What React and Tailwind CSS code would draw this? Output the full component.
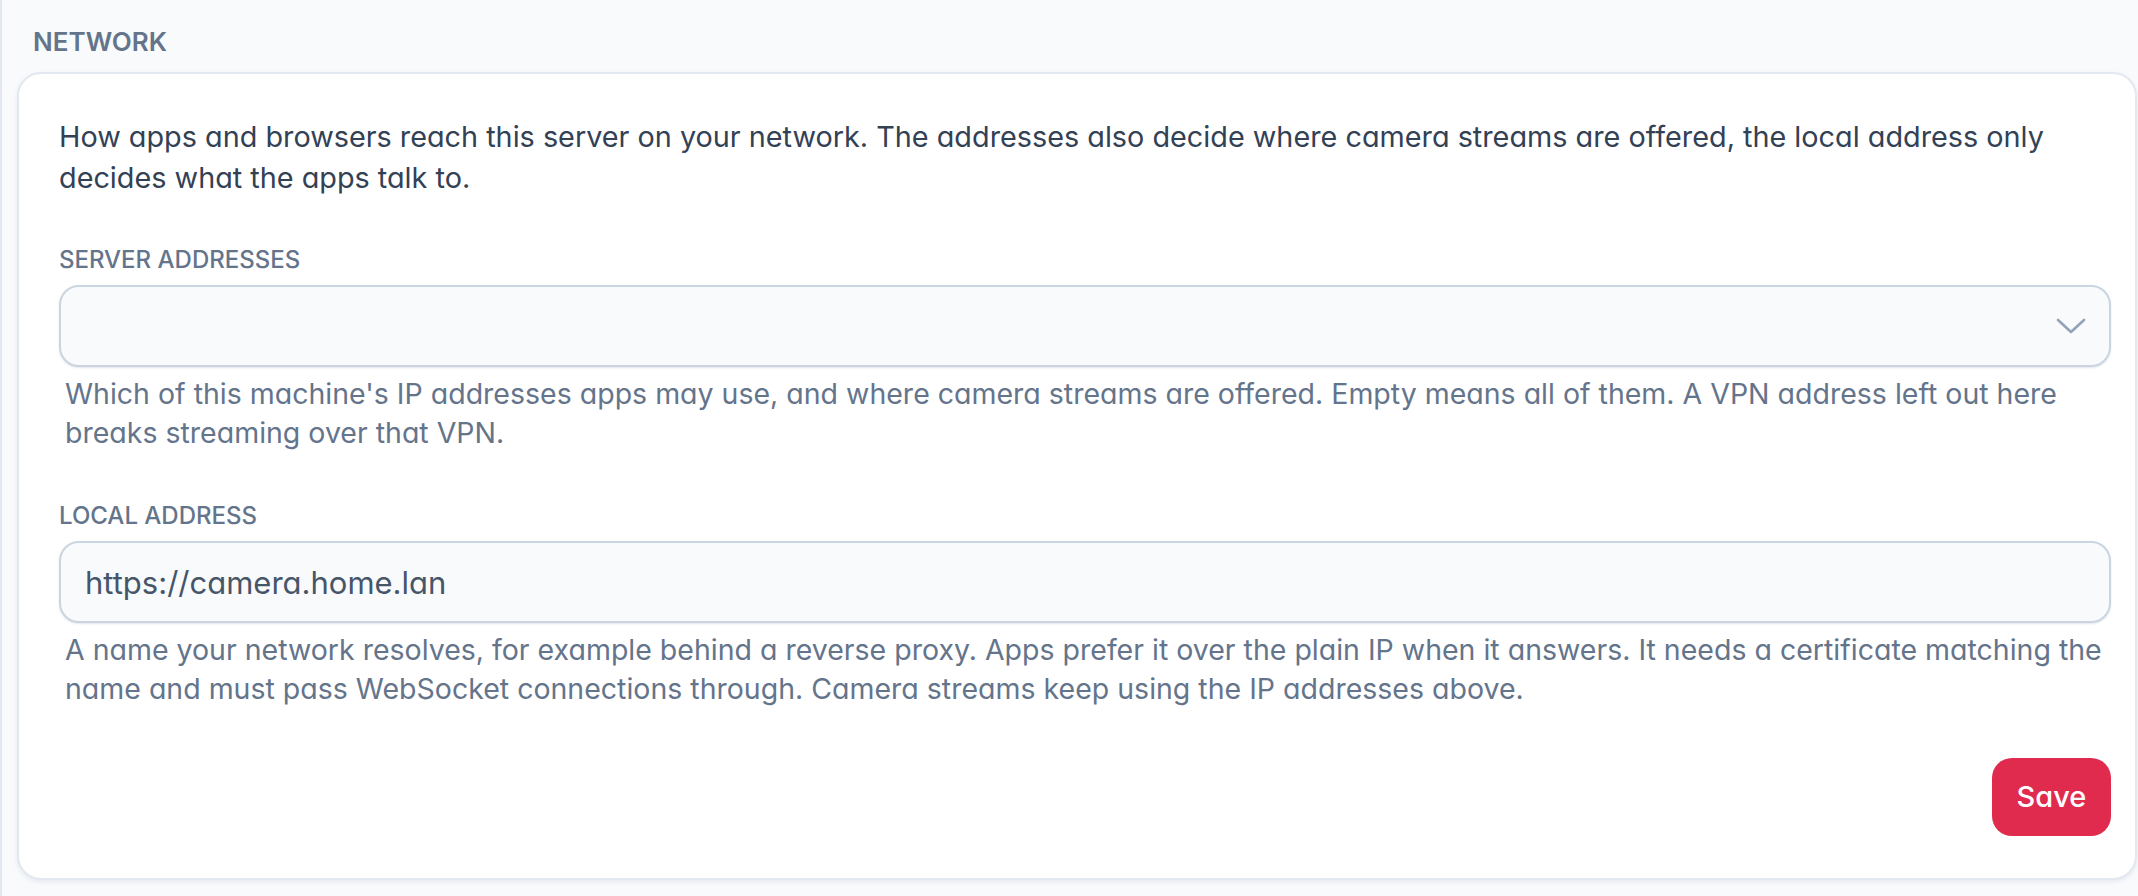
import React from "react";

function Chevron() {
  return (
    <svg width="30" height="18" viewBox="0 0 30 18" fill="none" className="text-[#94a3b8]">
      <path d="M2 3l13 12L28 3" stroke="currentColor" strokeWidth="2.6" strokeLinecap="round" strokeLinejoin="round" />
    </svg>
  );
}

function Field({ label, children, help }) {
  return (
    <div className="flex flex-col">
      <label className="text-[24px] leading-[28px] font-medium uppercase text-[#64748b]">{label}</label>
      <div className="mt-[11px]">{children}</div>
      <p className="mt-[7px] px-[6px] text-[28.5px] leading-[39px] text-[#64748b]">{help}</p>
    </div>
  );
}

export default function App() {
  return (
    <div className="min-h-screen bg-[#f8fafc] border-l-2 border-[#e2e8f0] pl-[15px] pr-[1px] pt-[28px] pb-[19px] font-['Inter',sans-serif] [font-feature-settings:'cv11'] antialiased">
      <h2 className="pl-4 text-[26px] leading-[28px] font-semibold uppercase text-[#64748b]">Network</h2>
      <section className="mt-4 rounded-3xl border-2 border-[#e2e8f0] bg-white pl-[40px] pr-[24px] pt-[42px] pb-[42px] shadow-[0_2px_4px_rgba(148,163,184,0.18)]">
        <p className="text-[28.8px] leading-[41px] text-[#334155]">
          How apps and browsers reach this server on your network. The addresses also decide where camera streams are offered, the local address only decides what the apps talk to.
        </p>

        <div className="mt-[48px]">
          <Field
            label="Server addresses"
            help="Which of this machine's IP addresses apps may use, and where camera streams are offered. Empty means all of them. A VPN address left out here breaks streaming over that VPN."
          >
            <button
              type="button"
              className="flex h-[82px] w-full items-center justify-end rounded-[20px] border-2 border-[#cbd5e1] bg-[#f8fafc] pr-[23px] shadow-[0_1px_2px_rgba(148,163,184,0.25)]"
            >
              <Chevron />
            </button>
          </Field>
        </div>

        <div className="mt-[50px]">
          <Field
            label="Local address"
            help="A name your network resolves, for example behind a reverse proxy. Apps prefer it over the plain IP when it answers. It needs a certificate matching the name and must pass WebSocket connections through. Camera streams keep using the IP addresses above."
          >
            <input
              readOnly
              value="https://camera.home.lan"
              className="h-[82px] w-full rounded-[20px] border-2 border-[#cbd5e1] bg-[#f8fafc] px-[24px] text-[31px] text-[#475569] outline-none shadow-[0_1px_2px_rgba(148,163,184,0.25)]"
            />
          </Field>
        </div>

        <div className="mt-[50px] flex justify-end">
          <button
            type="button"
            className="h-[78px] w-[119px] rounded-[20px] bg-[#e02a4e] text-[29px] font-medium text-white"
          >
            Save
          </button>
        </div>
      </section>
    </div>
  );
}
